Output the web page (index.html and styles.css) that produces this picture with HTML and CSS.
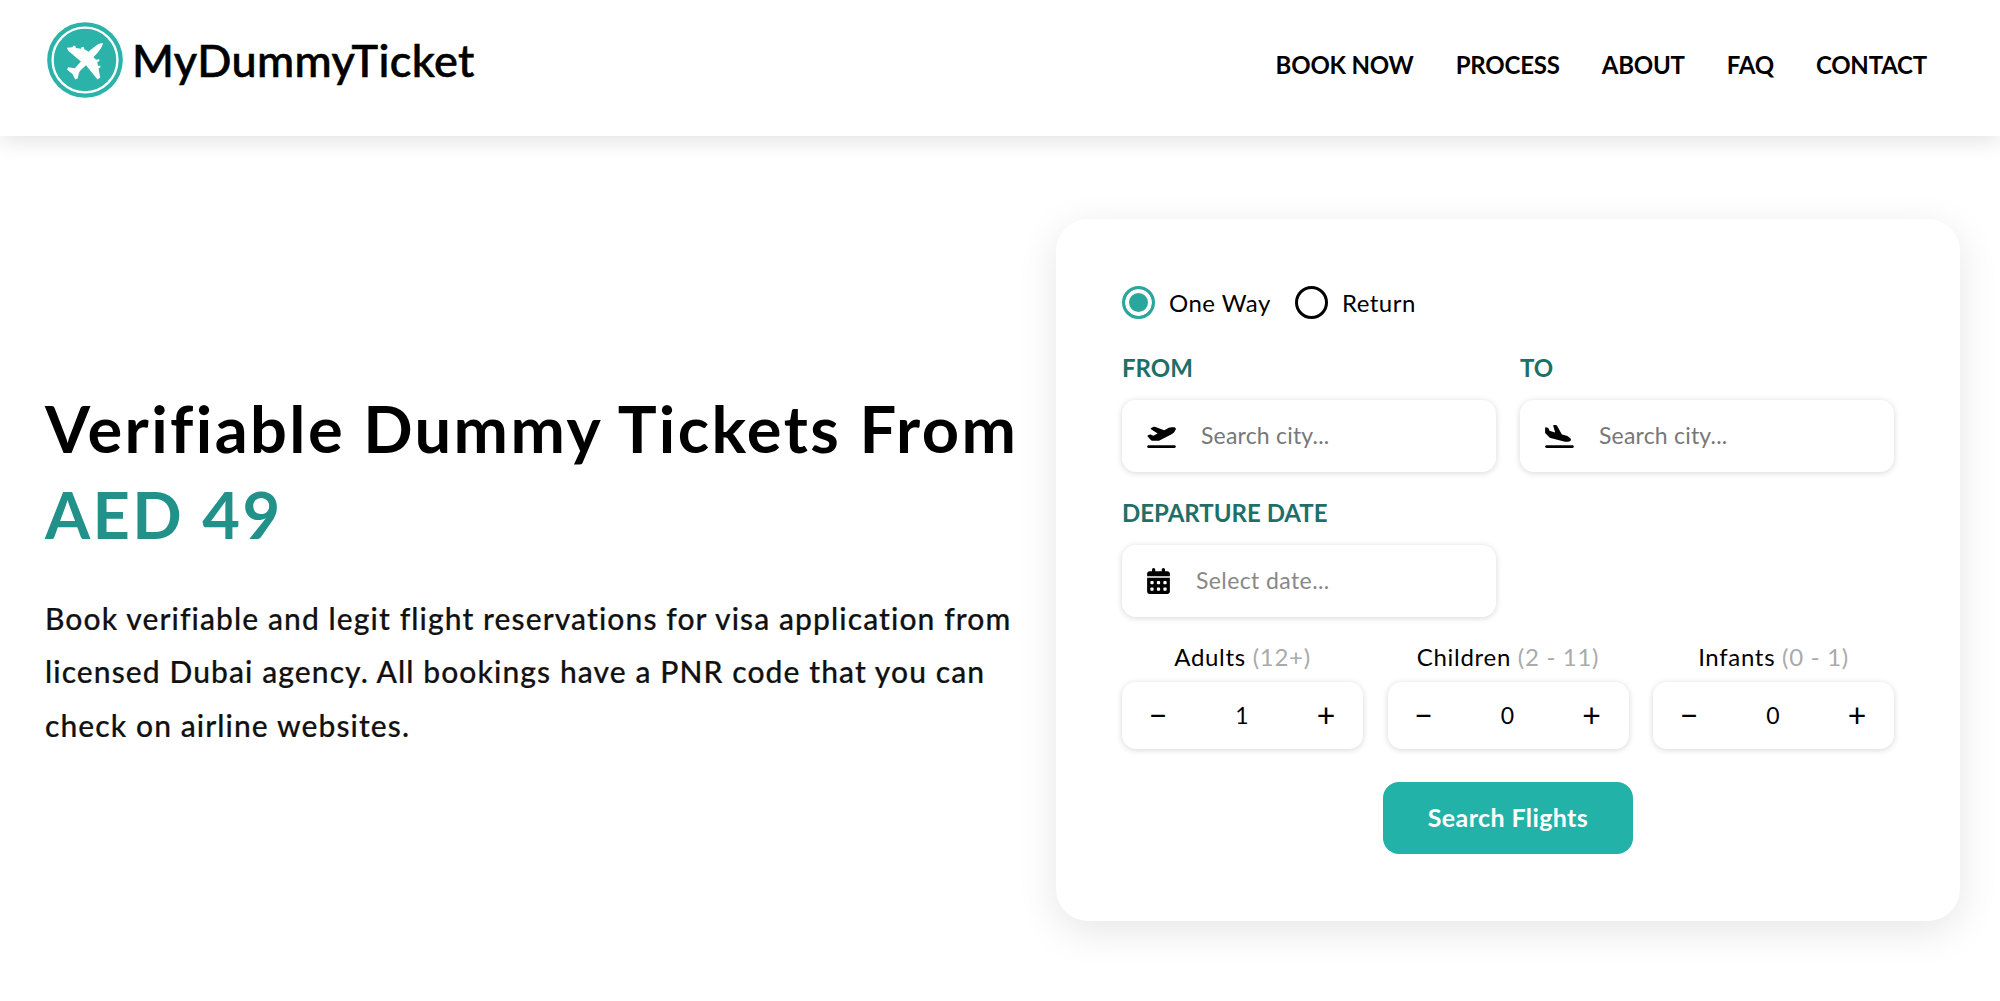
FILE: index.html
```html
<!DOCTYPE html>
<html lang="en">
<head>
<meta charset="utf-8">
<title>MyDummyTicket</title>
<link rel="stylesheet" href="styles.css">
</head>
<body>
<header class="site-header">
  <a class="brand" href="#">
    <svg class="brand-mark" viewBox="53 38 224 225" aria-hidden="true">
      <circle cx="165" cy="150.500" r="112" fill="#2bb3a9"/>
      <circle cx="165" cy="150.500" r="96" fill="#2bb3a9" stroke="#fff" stroke-width="7"/>
      <path fill="#fff" d="M218 100C217 112 203 130 190 142L198 150L207 148L208 153L201 158L204 168L210 167L211 172L205 176L210 202L202 208L168 166L150 183L147 190L143 205L136 208L128 192L112 179L115 172L135 175L153 155L116 124L111 114L128 113L130 108L136 108L138 115L153 117L155 112L161 112L163 119L176 126C192 110 208 100 218 100Z"/>
    </svg>
    <span class="brand-name">MyDummyTicket</span>
  </a>
  <nav class="site-nav">
    <a href="#">BOOK NOW</a>
    <a href="#">PROCESS</a>
    <a href="#">ABOUT</a>
    <a href="#">FAQ</a>
    <a href="#">CONTACT</a>
  </nav>
</header>
<main class="hero">
  <section class="hero-copy">
    <h1>Verifiable Dummy Tickets From<br><span class="price">AED 49</span></h1>
    <p>Book verifiable and legit flight reservations for visa application from licensed Dubai agency. All bookings have a PNR code that you can check on airline websites.</p>
  </section>
  <form class="search-card">
    <div class="trip-type">
      <label class="radio"><span class="dot is-on"></span>One Way</label>
      <label class="radio"><span class="dot"></span>Return</label>
    </div>
    <div class="field-grid">
      <div class="field">
        <div class="field-label">FROM</div>
        <div class="field-box">
          <svg class="icon-plane" viewBox="0 0 640 512" aria-hidden="true"><path d="M381 114.900L186.100 41.800c-16.700-6.200-35.200-5.300-51.100 2.700L89.100 67.400C78 73 77.200 88.500 87.600 95.200l146.900 94.500L136 240 77.800 214.100c-8.700-3.900-18.800-3.700-27.300.6L18.300 230.800c-9.300 4.700-11.800 16.800-5 24.700l73.100 85.300c6.100 7.100 15 11.200 24.300 11.200H248.400c5 0 9.900-1.200 14.300-3.400L535.600 212.200c46.500-23.300 82.500-63.300 100.800-112C645.900 75 627.200 48 600.200 48H542.800c-20.200 0-40.200 4.800-58.200 14L381 114.900zM0 480c0 17.700 14.300 32 32 32H608c17.700 0 32-14.300 32-32s-14.300-32-32-32H32c-17.700 0-32 14.300-32 32z"/></svg>
          <span class="placeholder">Search city...</span>
        </div>
      </div>
      <div class="field">
        <div class="field-label">TO</div>
        <div class="field-box">
          <svg class="icon-plane" viewBox="0 0 640 512" aria-hidden="true"><path d="M.3 166.900L0 68C0 57.700 9.500 50.100 19.500 52.300l35.600 7.900c10.600 2.300 19.200 9.900 23 20L96 128l127.300 37.600L181.800 20.400C178.900 10.200 186.600 0 197.200 0h40.100c11.600 0 22.200 6.200 27.900 16.300l109 193.800 107.200 31.700c15.900 4.700 30.800 12.500 43.700 22.800l34.400 27.600c24 19.200 18.100 57.300-10.700 68.200c-41.200 15.600-86.200 18.100-128.800 7L121.700 289.800c-11.100-2.900-21.200-8.700-29.300-16.900L9.500 189.400c-5.900-6-9.300-14-9.300-22.500zM32 448H608c17.700 0 32 14.300 32 32s-14.300 32-32 32H32c-17.700 0-32-14.300-32-32s14.300-32 32-32z"/></svg>
          <span class="placeholder">Search city...</span>
        </div>
      </div>
      <div class="field">
        <div class="field-label">DEPARTURE DATE</div>
        <div class="field-box">
          <svg class="icon-cal" viewBox="0 0 448 512" aria-hidden="true"><path d="M128 0c17.700 0 32 14.300 32 32V64H288V32c0-17.700 14.300-32 32-32s32 14.300 32 32V64h48c26.500 0 48 21.500 48 48v48H0V112C0 85.500 21.500 64 48 64H96V32c0-17.700 14.300-32 32-32zM0 192H448V464c0 26.500-21.500 48-48 48H48c-26.500 0-48-21.500-48-48V192zm64 80v32c0 8.800 7.200 16 16 16h32c8.800 0 16-7.200 16-16V272c0-8.800-7.200-16-16-16H80c-8.800 0-16 7.200-16 16zm128 0v32c0 8.800 7.200 16 16 16h32c8.800 0 16-7.200 16-16V272c0-8.800-7.200-16-16-16H208c-8.800 0-16 7.200-16 16zm144-16c-8.800 0-16 7.200-16 16v32c0 8.800 7.200 16 16 16h32c8.800 0 16-7.200 16-16V272c0-8.800-7.200-16-16-16H336zM64 400v32c0 8.800 7.200 16 16 16h32c8.800 0 16-7.200 16-16V400c0-8.800-7.200-16-16-16H80c-8.800 0-16 7.200-16 16zm144-16c-8.800 0-16 7.200-16 16v32c0 8.800 7.200 16 16 16h32c8.800 0 16-7.200 16-16V400c0-8.800-7.200-16-16-16H208zm112 16v32c0 8.800 7.200 16 16 16h32c8.800 0 16-7.200 16-16V400c0-8.800-7.200-16-16-16H336c-8.800 0-16 7.200-16 16z"/></svg>
          <span class="placeholder placeholder-date">Select date...</span>
        </div>
      </div>
    </div>
    <div class="pax-grid">
      <div class="pax">
        <div class="pax-label">Adults <span class="pax-age">(12+)</span></div>
        <div class="stepper"><span class="step-btn">−</span><span class="step-val">1</span><span class="step-btn">+</span></div>
      </div>
      <div class="pax">
        <div class="pax-label">Children <span class="pax-age">(2 - 11)</span></div>
        <div class="stepper"><span class="step-btn">−</span><span class="step-val">0</span><span class="step-btn">+</span></div>
      </div>
      <div class="pax">
        <div class="pax-label">Infants <span class="pax-age">(0 - 1)</span></div>
        <div class="stepper"><span class="step-btn">−</span><span class="step-val">0</span><span class="step-btn">+</span></div>
      </div>
    </div>
    <div class="submit-row"><button class="search-btn" type="button">Search Flights</button></div>
  </form>
</main>
</body>
</html>
```

FILE: styles.css
```css
* { box-sizing: border-box; }
html, body { margin: 0; padding: 0; }
body {
  background: #fff;
  color: #000;
  font-family: "Lato", "Noto Sans", sans-serif;
  min-height: 1001px;
  overflow: hidden;
}
a { color: inherit; text-decoration: none; }

.site-header {
  height: 136px;
  display: flex;
  align-items: center;
  justify-content: space-between;
  padding: 0 73px 8px 47px;
  background: #fff;
  box-shadow: 0 4px 22px rgba(0, 0, 0, 0.12);
  position: relative;
}
.brand { display: flex; align-items: center; gap: 9px; margin-bottom: 8px; }
.brand-mark { width: 76px; height: 76px; display: block; }
.brand-name {
  font-size: 45px;
  font-weight: 500;
  line-height: 60px;
  letter-spacing: 0.4px;
  -webkit-text-stroke: 0.6px #000;
}
.site-nav { display: flex; gap: 42px; font-size: 24px; font-weight: 700; letter-spacing: -0.2px; }

.hero {
  display: flex;
  align-items: center;
  justify-content: space-between;
  padding: 83px 40px 80px 45px;
}
.hero-copy { width: 985px; margin-top: -3px; }
.hero-copy h1 {
  margin: 0 0 35px;
  font-size: 65px;
  line-height: 86px;
  font-weight: 700;
  letter-spacing: 2.4px;
}
.price { color: #21918a; }
.hero-copy p {
  margin: 0;
  font-size: 30px;
  line-height: 53.500px;
  font-weight: 500;
  letter-spacing: 1.1px;
  color: #111;
  -webkit-text-stroke: 0.2px #111;
}

.search-card {
  width: 904px;
  height: 702px;
  padding: 67px 66px;
  background: #fff;
  border-radius: 32px;
  box-shadow: 0 10px 40px rgba(0, 0, 0, 0.1);
}
.trip-type { display: flex; gap: 24px; margin-bottom: 32px; }
.radio { display: flex; align-items: center; gap: 14px; font-size: 24px; letter-spacing: 0.5px; line-height: 32px; }
.dot {
  width: 33px;
  height: 33px;
  border-radius: 50%;
  border: 3px solid #000;
  background: #fff;
}
.dot.is-on {
  border-color: #2aa79d;
  background: #2aa79d;
  box-shadow: inset 0 0 0 4px #fff;
}

.field-grid {
  display: grid;
  grid-template-columns: 374px 374px;
  column-gap: 24px;
  row-gap: 24px;
}
.field-label {
  height: 34px;
  line-height: 33px;
  margin-bottom: 15px;
  font-size: 24px;
  font-weight: 700;
  color: #1d6f68;
}
.field-box {
  height: 72px;
  display: flex;
  align-items: center;
  padding-left: 25px;
  background: #fff;
  border-radius: 14px;
  box-shadow: 0 1px 6px rgba(0, 0, 0, 0.16);
}
.icon-plane { width: 29px; height: 23px; margin-right: 25px; flex: none; }
.icon-cal { width: 23px; height: 26px; margin-right: 26px; flex: none; }
.placeholder { font-size: 23px; color: #777; letter-spacing: 0.2px; line-height: 30px; padding-bottom: 2px; }
.placeholder-date { color: #888; letter-spacing: 0.4px; }

.pax-grid {
  display: grid;
  grid-template-columns: repeat(3, 241px);
  column-gap: 24.500px;
  margin-top: 24px;
}
.pax-label {
  height: 34px;
  line-height: 32px;
  margin-bottom: 7px;
  text-align: center;
  font-size: 24px;
  letter-spacing: 0.7px;
}
.pax-age { color: #aaa; }
.stepper {
  height: 67px;
  display: flex;
  align-items: center;
  justify-content: space-between;
  padding: 0 25px 2px 24px;
  background: #fff;
  border-radius: 14px;
  box-shadow: 0 1px 6px rgba(0, 0, 0, 0.16);
  font-size: 23px;
}
.step-btn { font-size: 32px; line-height: 32px; width: 24px; text-align: center; }

.submit-row { display: flex; justify-content: center; margin-top: 33px; }
.search-btn {
  width: 250px;
  height: 72px;
  border: 0;
  padding: 0 0 2px;
  border-radius: 16px;
  background: #23b2a8;
  color: #fff;
  font-family: inherit;
  font-size: 25px;
  letter-spacing: 0.4px;
  font-weight: 700;
}
```
